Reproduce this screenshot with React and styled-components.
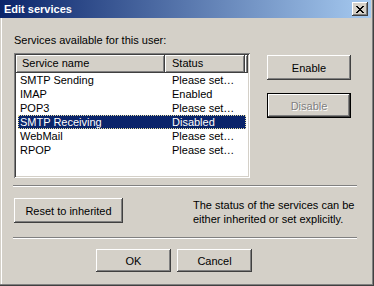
import React from 'react';
import styled, { createGlobalStyle, css } from 'styled-components';

const Global = createGlobalStyle`
  html, body {
    margin: 0;
    padding: 0;
    background: #d4d0c8;
  }
  * {
    box-sizing: border-box;
  }
`;

const face = '#d4d0c8';
const raised = css`
  box-shadow:
    inset -1px -1px #404040,
    inset 1px 1px #ffffff,
    inset -2px -2px #808080,
    inset 2px 2px ${face};
`;

const Window = styled.div`
  width: 374px;
  height: 286px;
  display: flex;
  flex-direction: column;
  padding: 0 3px 3px 0;
  background: ${face};
  font-family: "Liberation Sans", Arial, sans-serif;
  font-size: 11px;
  color: #000;
  box-shadow:
    inset -1px -1px #404040,
    inset -2px -2px #808080,
    inset 1px 0 ${face},
    inset 2px 0 #ffffff;
`;

const TitleBar = styled.div`
  height: 18px;
  display: flex;
  align-items: center;
  justify-content: space-between;
  padding: 0 3px 0 4px;
  background: linear-gradient(to right, #0a246a, #a6caf0);
  color: #fff;
  font-weight: bold;
  font-size: 11px;
`;

const CloseButton = styled.div`
  width: 16px;
  height: 14px;
  display: flex;
  align-items: center;
  justify-content: center;
  background: ${face};
  ${raised};
`;

const Body = styled.div`
  display: flex;
  flex-direction: column;
  padding: 16px 14px 0 13px;
`;

const Label = styled.div`
  line-height: 13px;
  padding-left: 1px;
`;

const Main = styled.div`
  display: flex;
  gap: 17px;
  margin-top: 6px;
  padding-left: 1px;
`;

const List = styled.div`
  width: 236px;
  height: 125px;
  padding: 2px;
  background: #fff;
  box-shadow:
    inset 1px 1px #808080,
    inset -1px -1px #ffffff,
    inset 2px 2px #404040,
    inset -2px -2px ${face};
`;

const Header = styled.div`
  display: grid;
  grid-template-columns: 149px 80px 3px;
  height: 18px;
`;

const HeaderCell = styled.div`
  background: ${face};
  padding-left: ${(p) => p.$pad}px;
  line-height: 17px;
  ${raised};
`;

const Rows = styled.div`
  display: flex;
  flex-direction: column;
  padding: 0 2px;
`;

const Row = styled.div`
  display: grid;
  grid-template-columns: 152px 1fr;
  height: 14px;
  line-height: 14px;
  ${(p) =>
    p.$selected &&
    css`
      background: #0a246a;
      color: #fff;
      outline: 1px dotted #e8e0a0;
      outline-offset: -1px;
    `}
`;

const Cell = styled.div`
  padding-left: 2px;
  white-space: nowrap;
  overflow: hidden;
`;

const Side = styled.div`
  display: flex;
  flex-direction: column;
  gap: 13px;
  padding-top: 2px;
`;

const Button = styled.div`
  width: ${(p) => p.$w}px;
  height: ${(p) => p.$h}px;
  display: flex;
  align-items: center;
  justify-content: center;
  background: ${face};
  ${raised};
  ${(p) =>
    p.$disabled &&
    css`
      color: #808080;
      text-shadow: 1px 1px #ffffff;
      box-shadow:
        inset 0 0 0 1px #000,
        inset -2px -2px #404040,
        inset 2px 2px #ffffff,
        inset -3px -3px #808080;
    `}
`;

const Separator = styled.div`
  height: 2px;
  border-top: 1px solid #808080;
  border-bottom: 1px solid #ffffff;
  margin-top: ${(p) => p.$top}px;
`;

const ResetRow = styled.div`
  display: flex;
  align-items: flex-start;
  margin-top: 11px;
  padding-left: 1px;
`;

const Note = styled.div`
  margin-left: 70px;
  line-height: 14px;
  white-space: nowrap;
`;

const Footer = styled.div`
  display: flex;
  gap: 6px;
  margin-top: 10px;
  padding-left: 83px;
`;

const services = [
  ['SMTP Sending', 'Please set…'],
  ['IMAP', 'Enabled'],
  ['POP3', 'Please set…'],
  ['SMTP Receiving', 'Disabled'],
  ['WebMail', 'Please set…'],
  ['RPOP', 'Please set…'],
];

const App = () => (
  <>
    <Global />
    <Window>
      <TitleBar>
        <span>Edit services</span>
        <CloseButton>
          <svg width="8" height="7" viewBox="0 0 8 7" shapeRendering="crispEdges">
            <path
              fill="#000"
              d="M0 0h2v1h-2zM6 0h2v1h-2zM1 1h2v1h-2zM5 1h2v1h-2zM2 2h4v1h-4zM3 3h2v1h-2zM2 4h4v1h-4zM1 5h2v1h-2zM5 5h2v1h-2zM0 6h2v1h-2zM6 6h2v1h-2z"
            />
          </svg>
        </CloseButton>
      </TitleBar>
      <Body>
        <Label>Services available for this user:</Label>
        <Main>
          <List>
            <Header>
              <HeaderCell $pad={6}>Service name</HeaderCell>
              <HeaderCell $pad={7}>Status</HeaderCell>
              <HeaderCell $pad={0} />
            </Header>
            <Rows>
              {services.map(([name, status]) => (
                <Row key={name} $selected={name === 'SMTP Receiving'}>
                  <Cell>{name}</Cell>
                  <Cell>{status}</Cell>
                </Row>
              ))}
            </Rows>
          </List>
          <Side>
            <Button $w={84} $h={25}>Enable</Button>
            <Button $w={84} $h={25} $disabled>Disable</Button>
          </Side>
        </Main>
        <Separator $top={7} />
        <ResetRow>
          <Button $w={109} $h={25}>Reset to inherited</Button>
          <Note>
            The status of the services can be
            <br />
            either inherited or set explicitly.
          </Note>
        </ResetRow>
        <Separator $top={11} />
        <Footer>
          <Button $w={75} $h={23}>OK</Button>
          <Button $w={75} $h={23}>Cancel</Button>
        </Footer>
      </Body>
    </Window>
  </>
);

export default App;
